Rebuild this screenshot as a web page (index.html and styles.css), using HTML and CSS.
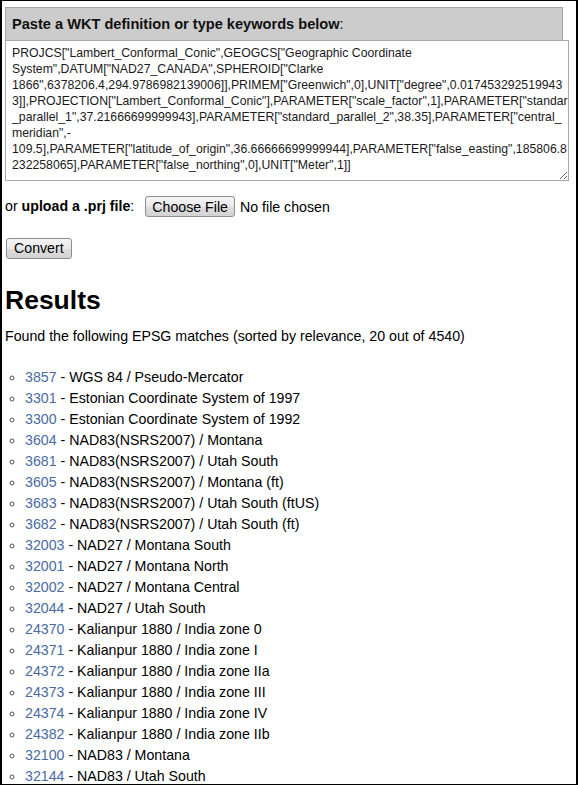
FILE: index.html
```html
<!DOCTYPE html>
<html lang="en">
<head>
<meta charset="utf-8">
<title>Prj2EPSG</title>
<link rel="stylesheet" href="styles.css">
</head>
<body>
<div class="frame">
  <form class="converter">
    <div class="prompt"><b>Paste a WKT definition or type keywords below</b>:</div>
    <textarea class="wkt" rows="8" wrap="off" spellcheck="false">PROJCS["Lambert_Conformal_Conic",GEOGCS["Geographic Coordinate
System",DATUM["NAD27_CANADA",SPHEROID["Clarke
1866",6378206.4,294.9786982139006]],PRIMEM["Greenwich",0],UNIT["degree",0.017453292519943
3]],PROJECTION["Lambert_Conformal_Conic"],PARAMETER["scale_factor",1],PARAMETER["standard
_parallel_1",37.21666699999943],PARAMETER["standard_parallel_2",38.35],PARAMETER["central_
meridian",-
109.5],PARAMETER["latitude_of_origin",36.66666699999944],PARAMETER["false_easting",185806.8
232258065],PARAMETER["false_northing",0],UNIT["Meter",1]]</textarea>
    <div class="upload">or <b>upload a .prj file</b>: <input type="file" class="file"></div>
    <div class="actions"><button type="button" class="btn">Convert</button></div>
  </form>
  <h1 class="title">Results</h1>
  <p class="summary">Found the following EPSG matches (sorted by relevance, 20 out of 4540)</p>
  <ul class="matches">
    <li><a href="#">3857</a> - WGS 84 / Pseudo-Mercator</li>
    <li><a href="#">3301</a> - Estonian Coordinate System of 1997</li>
    <li><a href="#">3300</a> - Estonian Coordinate System of 1992</li>
    <li><a href="#">3604</a> - NAD83(NSRS2007) / Montana</li>
    <li><a href="#">3681</a> - NAD83(NSRS2007) / Utah South</li>
    <li><a href="#">3605</a> - NAD83(NSRS2007) / Montana (ft)</li>
    <li><a href="#">3683</a> - NAD83(NSRS2007) / Utah South (ftUS)</li>
    <li><a href="#">3682</a> - NAD83(NSRS2007) / Utah South (ft)</li>
    <li><a href="#">32003</a> - NAD27 / Montana South</li>
    <li><a href="#">32001</a> - NAD27 / Montana North</li>
    <li><a href="#">32002</a> - NAD27 / Montana Central</li>
    <li><a href="#">32044</a> - NAD27 / Utah South</li>
    <li><a href="#">24370</a> - Kalianpur 1880 / India zone 0</li>
    <li><a href="#">24371</a> - Kalianpur 1880 / India zone I</li>
    <li><a href="#">24372</a> - Kalianpur 1880 / India zone IIa</li>
    <li><a href="#">24373</a> - Kalianpur 1880 / India zone III</li>
    <li><a href="#">24374</a> - Kalianpur 1880 / India zone IV</li>
    <li><a href="#">24382</a> - Kalianpur 1880 / India zone IIb</li>
    <li><a href="#">32100</a> - NAD83 / Montana</li>
    <li><a href="#">32144</a> - NAD83 / Utah South</li>
  </ul>
</div>
</body>
</html>
```
FILE: styles.css
```css
html, body {
  margin: 0;
  padding: 0;
  background: #fff;
}

body {
  font-family: "Liberation Sans", Arial, sans-serif;
  font-size: 14.2px;
  color: #000;
}

.frame {
  width: 578px;
  height: 785px;
  box-sizing: border-box;
  border: solid #000;
  border-width: 1px 2px 1px 2px;
  padding: 6px 0 0 3px;
  overflow: hidden;
}

.converter {
  margin: 0;
}

.prompt {
  width: 558px;
  height: 34px;
  box-sizing: border-box;
  background: #cccccc;
  border: 1px solid #a6a6a6;
  padding: 0 6px;
  font-size: 14.6px;
  line-height: 32px;
  color: #111;
}

.wkt {
  display: block;
  width: 564px;
  height: 141px;
  box-sizing: border-box;
  margin: -1px 0 0 0;
  padding: 4px 6px;
  border: 1px solid #a9a9a9;
  border-radius: 0;
  font-family: "Liberation Sans", Arial, sans-serif;
  font-size: 12.25px;
  line-height: 16px;
  color: #1a1a1a;
  background: #fff;
  resize: both;
  overflow: hidden;
  white-space: pre;
  outline: none;
}

.upload {
  margin-top: 15px;
  height: 21px;
  line-height: 21px;
  white-space: nowrap;
}

.file {
  font: inherit;
  height: 21px;
  margin: 0 0 0 7px;
  padding: 0;
  vertical-align: top;
  color: #000;
}

.file::file-selector-button {
  height: 21px;
  margin: 0 5px 0 0;
  padding: 0 6px 2px;
  border: 1px solid #8e8e8e;
  border-radius: 3px;
  background: linear-gradient(#f5f5f5, #e9e9e9 50%, #dddddd 51%, #d3d3d3);
  font: inherit;
  color: #000;
}

.actions {
  margin-top: 21px;
  height: 21px;
}

.btn {
  display: block;
  height: 21px;
  margin: 0 0 0 1px;
  padding: 0 7px 1px;
  border: 1px solid #8e8e8e;
  border-radius: 3px;
  background: linear-gradient(#f5f5f5, #e9e9e9 50%, #dddddd 51%, #d3d3d3);
  font: inherit;
  color: #000;
}

.title {
  margin: 26px 0 0;
  font-size: 26.5px;
  line-height: 30px;
  font-weight: bold;
}

.summary {
  margin: 13px 0 0;
  line-height: 17px;
}

.matches {
  margin: 22px 0 0;
  padding-left: 20px;
  list-style: circle;
}

.matches li {
  line-height: 21px;
}

.matches li::marker {
  color: #555;
}

.matches a {
  color: #4a6aa3;
  text-decoration: none;
}
```
